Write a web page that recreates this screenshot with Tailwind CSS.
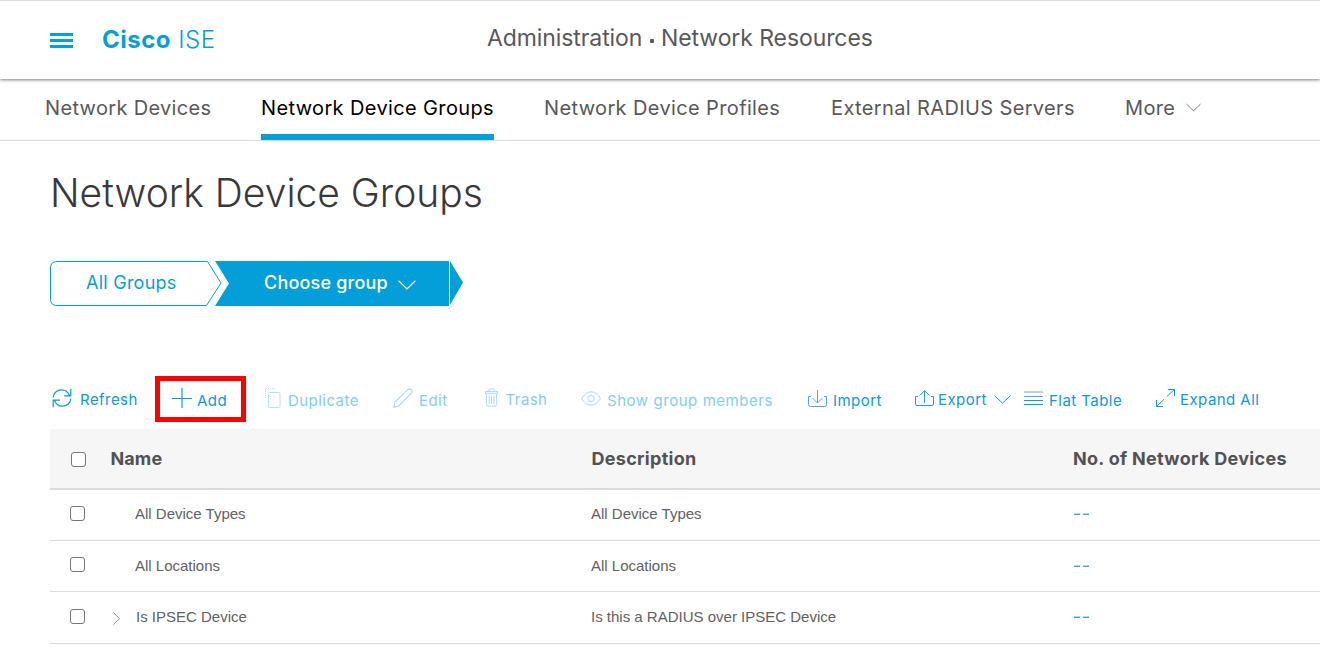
<!DOCTYPE html>
<html lang="en">
<head>
<meta charset="utf-8">
<title>Cisco ISE</title>
<script src="https://cdn.jsdelivr.net/npm/@tailwindcss/browser@4"></script>
</head>
<body class="bg-white h-[670px] overflow-hidden font-['Inter','Liberation_Sans',sans-serif] text-[#58585b]">
<header class="relative h-[79px] border-t border-[#d9d9d9] bg-white shadow-[0_1px_3px_rgba(0,0,0,0.5)] flex items-start whitespace-nowrap">
  <svg class="ml-[50px] mt-8 w-[23px] h-[15px] shrink-0" viewBox="0 0 23 15" fill="#049fd9"><path d="M0 0h23v3H0zM0 6h23v3H0zM0 12h23v3H0z"/></svg>
  <div class="ml-[29px] mt-6 w-[385px] text-2xl leading-[30px] text-[#049fd9] tracking-[0.5px]"><span class="font-bold">Cisco</span> <span class="font-light">ISE</span></div>
  <div class="mt-[22px] flex text-[23px] leading-[30px] tracking-[-0.09px]"><span class="w-[162px]">Administration</span><span class="w-3 mt-[16px] shrink-0"><span class="block ml-px size-[4px] rounded-[1px] bg-[#58585b]"></span></span><span>Network Resources</span></div>
</header>
<nav class="h-[62px] border-b border-[#dcdcdc] flex text-xl leading-[58px] tracking-[0.37px] whitespace-nowrap">
  <a class="ml-[45px] w-[216px] tracking-[0.33px]">Network Devices</a>
  <a class="w-[233px] border-b-6 border-[#049fd9] text-black">Network Device Groups</a>
  <a class="ml-[50px] w-[287px]">Network Device Profiles</a>
  <a class="w-[294px]">External RADIUS Servers</a>
  <a class="flex">More<svg class="ml-[11px] mt-[24px] w-[15px] h-[9px]" viewBox="0 0 16 9" fill="none" stroke="#77777a"><path d="M.5.8 8 8 15.500.8"/></svg></a>
</nav>
<main class="pl-[50px]">
  <h1 class="pt-6 text-[39px] leading-[56px] font-light text-[#39393b]">Network Device Groups</h1>
  <div class="relative mt-10 h-[45px] w-[413px] text-lg leading-[45px]">
    <svg class="absolute inset-0 w-[413px] h-[45px]" viewBox="0 0 413 45">
      <path d="M7 .5H157.500L171 22 156.500 44.500H7Q.5 44.500.5 38V7Q.5.5 7 .5Z" fill="#fff" stroke="#049fd9"/>
      <path d="M165 0H399V45H165L179 22.500ZM400 0 413 21.500 400 44Z" fill="#049fd9"/>
    </svg>
    <div class="relative flex whitespace-nowrap leading-[44px]">
      <a class="ml-9 w-[178px] text-[#049fd9] tracking-[0.25px]">All Groups</a>
      <a class="flex text-white font-medium tracking-[0.2px]">Choose group<svg class="ml-2.5 mt-[19px] w-[18px] h-[10px]" viewBox="0 0 18 10" fill="none" stroke="#fff" stroke-width="1.200"><path d="M.6.7 9 9 17.400.7"/></svg></a>
    </div>
  </div>
  <div class="mt-[70px] h-[46px] mb-[7px] flex text-[15px] leading-[48px] tracking-[0.45px] text-[#0d9ad8] whitespace-nowrap">
    <a class="w-[105px] flex"><svg class="ml-[2px] mt-[12px] mr-[8px] w-5 h-5" viewBox="0 0 20 20" fill="none" stroke="currentColor" stroke-width="1.200"><path d="M1.200 9.500C1.500 5 5 1.800 9.500 1.800c3.800 0 6.500 2 8 5.700M18.800.8V7.800H12M18.800 10.500C18.500 15 15 18.200 10.500 18.200c-3.800 0-6.500-2-8-5.700M1.200 19.200V12.200H8"/></svg>Refresh</a>
    <a class="w-[91px] flex border-5 border-[#ff0000] leading-[40px]"><svg class="ml-3 mt-[7px] mr-[5px] w-5 h-5 shrink-0" viewBox="0 0 20 20" fill="none" stroke="currentColor" stroke-width="1.200"><path d="M10 0v20M0 10.500h20"/></svg>Add</a>
    <a class="ml-[19px] w-[128px] flex leading-[50px] text-[#82cfec]"><svg class="mt-[12px] mr-[6px] w-[17px] h-5" viewBox="0 0 17 20" fill="none" stroke="#b4e0f3"><rect x="3.500" y="4.500" width="11.500" height="15" rx="1"/><path d="M.5 10V.5H11" stroke-dasharray="1 1"/></svg>Duplicate</a>
    <a class="w-[91px] flex leading-[50px] text-[#82cfec]"><svg class="mt-[12px] mr-[6px] w-5 h-5" viewBox="0 0 20 20" fill="none" stroke="#a3daf1" stroke-width="1.100"><path d="M.8 19.200 2 14 14.800 1.600Q16.500.2 18.300 1.700 19.800 3.500 18.400 5.200L5.700 18Z"/></svg>Edit</a>
    <a class="w-[97px] flex text-[#82cfec]"><svg class="ml-px mt-[12px] mr-[7.500px] w-[13px] h-[19px]" viewBox="0 0 14 20" fill="none" stroke="#a3daf1"><path d="M.5 5.500V3.500H13.500V5.500ZM4 3.500V2Q4 .8 5.200.8H8.800Q10 .8 10 2V3.500M1.500 5.500V17.500Q1.500 19.300 3.300 19.300H10.700Q12.500 19.300 12.500 17.500V5.500M4.500 8V17M7 8V17M9.500 8V17"/></svg>Trash</a>
    <a class="w-[225px] flex leading-[50px] tracking-[0.55px] text-[#82cfec]"><svg class="mt-[15px] mr-[6px] w-5 h-[15px]" viewBox="0 0 20 15" fill="none" stroke="#a3daf1"><path d="M.6 7.500Q4.500.8 10 .8 15.500.8 19.400 7.500 15.500 14.200 10 14.200 4.500 14.200.6 7.500Z"/><circle cx="10" cy="7.500" r="3.200"/></svg>Show group members</a>
    <a class="w-[108px] flex leading-[50px]"><svg class="ml-[2px] mt-[14px] mr-[6px] w-[19px] h-[17px]" viewBox="0 0 19 17" fill="none" stroke="#4da9dc"><path d="M9.500 0V13M4.500 8 9.500 13 14.500 8M3 6.500H.5V14.500Q.5 16.500 2.500 16.500H16.500Q18.500 16.500 18.500 14.500V6.500H16"/></svg>Import</a>
    <a class="w-[109px] flex"><svg class="ml-px mt-[14px] mr-[4px] w-[19px] h-4" viewBox="0 0 19 16" fill="none" stroke="#1f9fd9"><path d="M9.500 13V.8M4.500 5.500 9.500.8 14.500 5.500M3 6.500H.5V14Q.5 15.500 2 15.500H17Q18.500 15.500 18.500 14V6.500H16"/></svg>Export<svg class="ml-[7px] mt-[19px] w-[17px] h-[9px]" viewBox="0 0 17 9" fill="none" stroke="currentColor"><path d="M.5.6 8.500 8.200 16.500.6"/></svg></a>
    <a class="ml-px w-[132px] flex leading-[50px]"><svg class="mt-[15px] mr-[6px] w-[19px] h-[15px]" viewBox="0 0 19 15"><path d="M0 0H19V2H0Z" fill="#b5d6ea"/><path d="M0 5H19V6H0Z" fill="#4da9dc"/><path d="M0 9H19V10H0ZM0 13H19V14H0Z" fill="#049fd9"/></svg>Flat Table</a>
    <a class="flex"><svg class="mt-[13px] mr-[5px] w-[19px] h-[18px]" viewBox="0 0 19 18" fill="none" stroke="currentColor"><path d="M12 .5H18.500V7M18.500.5 10.800 7.500M.5 11V17.500H7M.5 17.500 8 10.300"/></svg>Expand All</a>
  </div>
  <div class="grid grid-cols-[60.5px_481px_481.5px_1fr] h-[61px] bg-[#f6f6f6] border-b-2 border-[#dcdcdc] text-lg leading-[59px] font-bold tracking-[0.3px] text-[#525255] whitespace-nowrap">
    <span class="ml-[21px] mt-[23px] size-[15px] rounded-[3px] border border-[#767676] bg-white"></span>
    <span class="tracking-[0.1px]">Name</span><span>Description</span><span>No. of Network Devices</span>
  </div>
  <div class="font-['Liberation_Sans',sans-serif] text-[15px] text-[#616164] whitespace-nowrap">
    <div class="grid grid-cols-[85px_456px_482px_1fr] h-[51px] border-b border-[#dcdcdc] leading-[48px]">
      <span class="ml-5 mt-4 size-[15px] rounded-[3px] border border-[#767676]"></span>
      <span>All Device Types</span><span>All Device Types</span>
      <span class="flex gap-[3px] pt-[24px]"><i class="w-1.5 h-px ml-px bg-[#3aa5dc] shadow-[0_-1px_0_#b5d6ea]"></i><i class="w-1.5 h-px bg-[#3aa5dc] shadow-[0_-1px_0_#b5d6ea]"></i></span>
    </div>
    <div class="grid grid-cols-[85px_456px_482px_1fr] h-[51px] border-b border-[#dcdcdc] leading-[50px]">
      <span class="ml-5 mt-4 size-[15px] rounded-[3px] border border-[#767676]"></span>
      <span>All Locations</span><span>All Locations</span>
      <span class="flex gap-[3px] pt-[25px]"><i class="w-1.5 h-px ml-px bg-[#3aa5dc] shadow-[0_-1px_0_#b5d6ea]"></i><i class="w-1.5 h-px bg-[#3aa5dc] shadow-[0_-1px_0_#b5d6ea]"></i></span>
    </div>
    <div class="grid grid-cols-[63px_23px_455px_482px_1fr] h-[52px] border-b border-[#dcdcdc] leading-[50px]">
      <span class="ml-5 mt-[17px] size-[15px] rounded-[3px] border border-[#767676]"></span>
      <svg class="mt-[20px] w-[7px] h-[13px]" viewBox="0 0 7 13" fill="none" stroke="#8a8a8c"><path d="M.5.5 6.300 6.500.5 12.500"/></svg>
      <span>Is IPSEC Device</span><span>Is this a RADIUS over IPSEC Device</span>
      <span class="flex gap-[3px] pt-[25px]"><i class="w-1.5 h-px ml-px bg-[#3aa5dc] shadow-[0_-1px_0_#b5d6ea]"></i><i class="w-1.5 h-px bg-[#3aa5dc] shadow-[0_-1px_0_#b5d6ea]"></i></span>
    </div>
  </div>
</main>
</body>
</html>
